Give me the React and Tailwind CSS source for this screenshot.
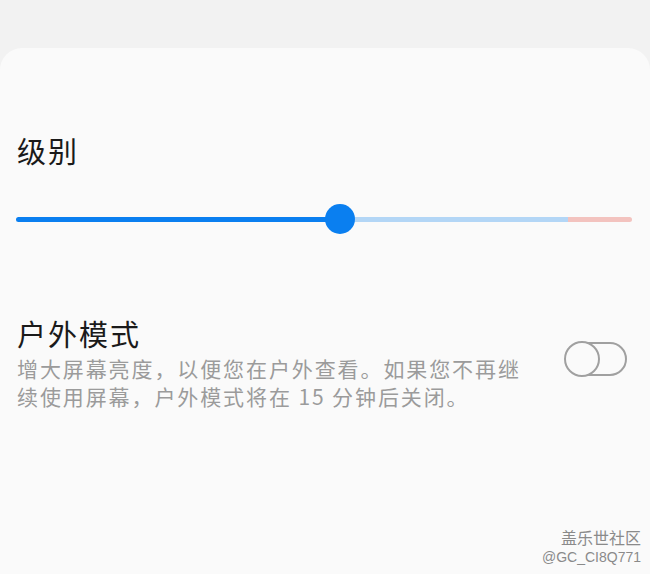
export default function App() {
    const font = { fontFamily: '"Noto Sans CJK SC", "Noto Sans", sans-serif' };

    return (
        <div className="relative w-[650px] h-[574px] bg-[#f2f2f2] flex flex-col overflow-hidden" style={font}>
            <div className="h-[48px] shrink-0" />

            <div className="flex-1 bg-[#fafafa] rounded-t-[22px] pl-[16px] pr-[18px] pt-[82px]">
                {/* Brightness level */}
                <div className="text-[29px] leading-[40px] tracking-[2px] text-[#1a1a1a] pl-[1px]">级别</div>

                <div className="relative mt-[34px] h-[30px] flex items-center">
                    <div className="w-full h-[5px] flex rounded-full overflow-hidden">
                        <div className="w-[324px] bg-[#0a7ff0]" />
                        <div className="w-[228px] bg-[#b3d6f6]" />
                        <div className="flex-1 bg-[#f3c3bf]" />
                    </div>
                    <div className="absolute left-[309px] top-0 w-[30px] h-[30px] rounded-full bg-[#0a7ff0]" />
                </div>

                {/* Outdoor mode */}
                <div className="mt-[79px] flex items-start justify-between">
                    <div className="pl-[1px]">
                        <div className="text-[29px] leading-[40px] tracking-[2px] text-[#1a1a1a]">户外模式</div>
                        <div className="mt-[1px] text-[21px] leading-[28px] tracking-[1.9px] text-[#9b9b9b] w-[520px]">
                            增大屏幕亮度，以便您在户外查看。如果您不再继续使用屏幕，户外模式将在 15 分钟后关闭。
                        </div>
                    </div>

                    <div className="mt-[28px] mr-[5px] relative w-[63px] h-[36px] shrink-0">
                        <div className="absolute left-[1px] right-0 top-[1px] bottom-[1px] rounded-full border-2 border-[#a0a0a0]" />
                        <div className="absolute left-0 top-0 w-[36px] h-[36px] rounded-full border-2 border-[#a0a0a0] bg-[#fafafa]" />
                    </div>
                </div>
            </div>

            {/* Watermark */}
            <div className="absolute right-[9px] bottom-[8px] flex flex-col items-end text-[#8a8a8a]">
                <div className="text-[16px] leading-[22px]">盖乐世社区</div>
                <div className="text-[14px] leading-[18px]" style={{ fontFamily: '"Liberation Sans", sans-serif' }}>@GC_CI8Q771</div>
            </div>
        </div>
    );
}
